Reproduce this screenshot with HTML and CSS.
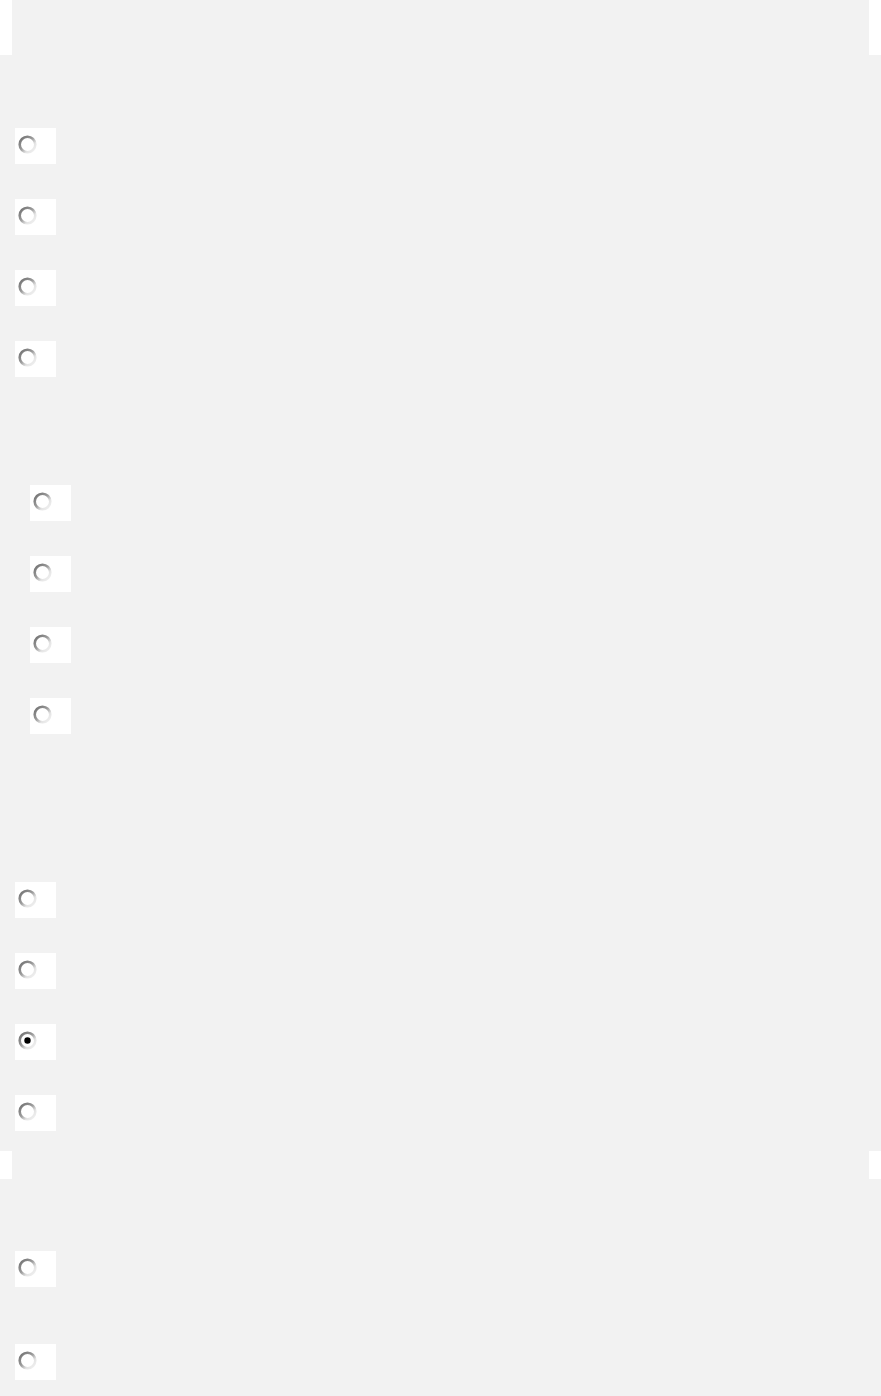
FILE: index.html
```html
<!DOCTYPE html>
<html lang="en">
<head>
<meta charset="utf-8">
<title>Options</title>
<link rel="stylesheet" href="styles.css">
</head>
<body>
<svg class="defs" width="0" height="0" aria-hidden="true">
  <defs>
    <linearGradient id="ring" x1="0" y1="0" x2="1" y2="1">
      <stop offset="0" stop-color="#6e6e6e"/>
      <stop offset="0.45" stop-color="#9a9a9a"/>
      <stop offset="0.7" stop-color="#e4e4e4"/>
      <stop offset="1" stop-color="#f3f3f3"/>
    </linearGradient>
  </defs>
</svg>

<div class="bar bar-top"></div>

<section class="panel panel-main">
  <div class="group">
    <label class="option"><svg class="radio" viewBox="0 0 19 19"><circle cx="9.5" cy="9.5" r="7.8" fill="#fff" stroke="url(#ring)" stroke-width="2.6"/></svg></label>
    <label class="option"><svg class="radio" viewBox="0 0 19 19"><circle cx="9.5" cy="9.5" r="7.8" fill="#fff" stroke="url(#ring)" stroke-width="2.6"/></svg></label>
    <label class="option"><svg class="radio" viewBox="0 0 19 19"><circle cx="9.5" cy="9.5" r="7.8" fill="#fff" stroke="url(#ring)" stroke-width="2.6"/></svg></label>
    <label class="option"><svg class="radio" viewBox="0 0 19 19"><circle cx="9.5" cy="9.5" r="7.8" fill="#fff" stroke="url(#ring)" stroke-width="2.6"/></svg></label>
  </div>

  <div class="group group-indent">
    <label class="option"><svg class="radio" viewBox="0 0 19 19"><circle cx="9.5" cy="9.5" r="7.8" fill="#fff" stroke="url(#ring)" stroke-width="2.6"/></svg></label>
    <label class="option"><svg class="radio" viewBox="0 0 19 19"><circle cx="9.5" cy="9.5" r="7.8" fill="#fff" stroke="url(#ring)" stroke-width="2.6"/></svg></label>
    <label class="option"><svg class="radio" viewBox="0 0 19 19"><circle cx="9.5" cy="9.5" r="7.8" fill="#fff" stroke="url(#ring)" stroke-width="2.6"/></svg></label>
    <label class="option"><svg class="radio" viewBox="0 0 19 19"><circle cx="9.5" cy="9.5" r="7.8" fill="#fff" stroke="url(#ring)" stroke-width="2.6"/></svg></label>
  </div>

  <div class="group group-third">
    <label class="option"><svg class="radio" viewBox="0 0 19 19"><circle cx="9.5" cy="9.5" r="7.8" fill="#fff" stroke="url(#ring)" stroke-width="2.6"/></svg></label>
    <label class="option"><svg class="radio" viewBox="0 0 19 19"><circle cx="9.5" cy="9.5" r="7.8" fill="#fff" stroke="url(#ring)" stroke-width="2.6"/></svg></label>
    <label class="option"><svg class="radio" viewBox="0 0 19 19"><circle cx="9.5" cy="9.5" r="7.8" fill="#fff" stroke="url(#ring)" stroke-width="2.6"/><circle cx="9.5" cy="9.5" r="3.2" fill="#000"/></svg></label>
    <label class="option"><svg class="radio" viewBox="0 0 19 19"><circle cx="9.5" cy="9.5" r="7.8" fill="#fff" stroke="url(#ring)" stroke-width="2.6"/></svg></label>
  </div>
</section>

<div class="bar bar-mid"></div>

<section class="panel panel-last">
  <div class="group group-wide">
    <label class="option"><svg class="radio" viewBox="0 0 19 19"><circle cx="9.5" cy="9.5" r="7.8" fill="#fff" stroke="url(#ring)" stroke-width="2.6"/></svg></label>
    <label class="option"><svg class="radio" viewBox="0 0 19 19"><circle cx="9.5" cy="9.5" r="7.8" fill="#fff" stroke="url(#ring)" stroke-width="2.6"/></svg></label>
  </div>
</section>
</body>
</html>
```
FILE: styles.css
```css
html, body {
  margin: 0;
  padding: 0;
  background: #ffffff;
  font-family: "Liberation Sans", Arial, sans-serif;
}

.defs {
  position: absolute;
  width: 0;
  height: 0;
}

.bar {
  margin: 0 12px;
  background: #f2f2f2;
}

.bar-top {
  height: 55px;
}

.bar-mid {
  height: 28px;
}

.panel {
  background: #f2f2f2;
  display: flex;
  flex-direction: column;
}

.panel-main {
  padding: 73px 0 20px;
}

.panel-last {
  padding: 72px 0 16px;
}

.group {
  display: flex;
  flex-direction: column;
  align-items: flex-start;
  gap: 35px;
  padding-left: 15px;
}

.group-indent {
  margin-top: 108px;
  padding-left: 30px;
}

.group-third {
  margin-top: 148px;
}

.group-wide {
  gap: 57px;
}

.option {
  display: flex;
  align-items: flex-start;
  box-sizing: border-box;
  width: 41px;
  height: 36px;
  padding: 7px 0 0 3px;
  background: #ffffff;
}

.radio {
  display: block;
  width: 19px;
  height: 19px;
}
```
